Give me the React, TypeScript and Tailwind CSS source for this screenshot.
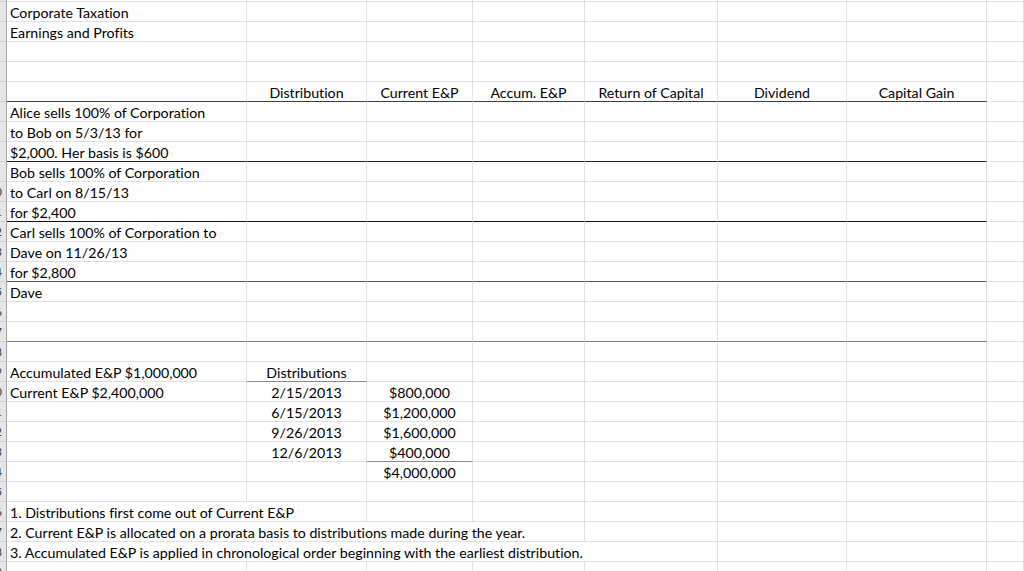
import React from 'react';

type RowDef = {
  a?: string;
  cells?: (string | null)[];
  b?: string;
  c?: string;
  line?: string;
  bLine?: boolean;
  cLine?: boolean;
  span?: 2 | 4 | 5;
};

const grid = 'grid grid-cols-[7px_240px_120px_106px_112px_133px_129px_140px_1fr]';
const base = 'h-[20px] border-r border-b border-r-[#e1e1e1] flex items-end whitespace-nowrap';
const light = 'border-b-[#e1e1e1]';

const spanClass = { 2: 'col-span-2', 4: 'col-span-4', 5: 'col-span-5' };

const rows: RowDef[] = [
  { a: 'Corporate Taxation' },
  { a: 'Earnings and Profits' },
  {},
  {},
  {
    cells: [null, 'Distribution', 'Current E&P', 'Accum. E&P', 'Return of Capital', 'Dividend', 'Capital Gain'],
    line: 'border-b-[#3c3c3c]',
  },
  { a: 'Alice sells 100% of Corporation' },
  { a: 'to Bob on 5/3/13 for' },
  { a: '$2,000. Her basis is $600', line: 'border-b-[#222222]' },
  { a: 'Bob sells 100% of Corporation' },
  { a: 'to Carl on 8/15/13' },
  { a: 'for $2,400', line: 'border-b-[#111111]' },
  { a: 'Carl sells 100% of Corporation to' },
  { a: 'Dave on 11/26/13' },
  { a: 'for $2,800', line: 'border-b-[#555555]' },
  { a: 'Dave' },
  {},
  { line: 'border-b-[#7a7a7a]' },
  {},
  { a: 'Accumulated E&P $1,000,000', b: 'Distributions', bLine: true },
  { a: 'Current E&P $2,400,000', b: '2/15/2013', c: '$800,000' },
  { b: '6/15/2013', c: '$1,200,000' },
  { b: '9/26/2013', c: '$1,600,000' },
  { b: '12/6/2013', c: '$400,000', cLine: true },
  { c: '$4,000,000' },
  {},
  { a: '1. Distributions first come out of Current E&P', span: 2 },
  { a: '2. Current E&P is allocated on a prorata basis to distributions made during the year.', span: 4 },
  { a: '3. Accumulated E&P is applied in chronological order beginning with the earliest distribution.', span: 5 },
  {},
  {},
];

function RowHeader({ num }: { num: number }) {
  // only the right edge of the row numbers shows in the narrow header strip
  return (
    <div className="h-[20px] overflow-hidden flex justify-end items-center bg-[#e6e6e6] border-r border-b border-r-[#a3a3a3] border-b-[#d0d0d0] pr-[4px]">
      {num >= 10 && <span className="text-[11px] leading-none text-[#333]">{num}</span>}
    </div>
  );
}

function SheetRow({ row, num }: { row: RowDef; num: number }) {
  const bottom = row.line ?? light;
  const values: (string | null)[] = row.cells ?? [row.a ?? null, row.b ?? null, row.c ?? null, null, null, null, null];
  const start = row.span ?? 1;

  return (
    <div className={grid}>
      <RowHeader num={num} />
      <div className={`${base} ${bottom} px-[3px] ${row.span ? spanClass[row.span] : ''}`}>{values[0]}</div>
      {values.slice(start).map((v, i) => {
        const col = i + start;
        let b = bottom;
        if (col === 1 && row.bLine) b = 'border-b-[#8c8c8c]';
        if (col === 2 && row.cLine) b = 'border-b-[#8c8c8c]';
        return (
          <div key={col} className={`${base} ${b} justify-center`}>
            {v}
          </div>
        );
      })}
      <div className={`${base} ${light}`} />
    </div>
  );
}

export default function App() {
  return (
    <div className="w-[1024px] h-[571px] overflow-hidden bg-white text-black text-[14.2px] leading-[16px] [font-variant-ligatures:none] font-['Lato','Liberation_Sans',sans-serif]">
      <div className={grid}>
        <div className="h-[2px] bg-[#e6e6e6] border-r border-b border-r-[#a3a3a3] border-b-[#d0d0d0]" />
        {Array.from({ length: 8 }).map((_, i) => (
          <div key={i} className="h-[2px] border-r border-b border-r-[#e1e1e1] border-b-[#e1e1e1]" />
        ))}
      </div>
      {rows.map((row, i) => (
        <SheetRow key={i} row={row} num={i + 1} />
      ))}
    </div>
  );
}
